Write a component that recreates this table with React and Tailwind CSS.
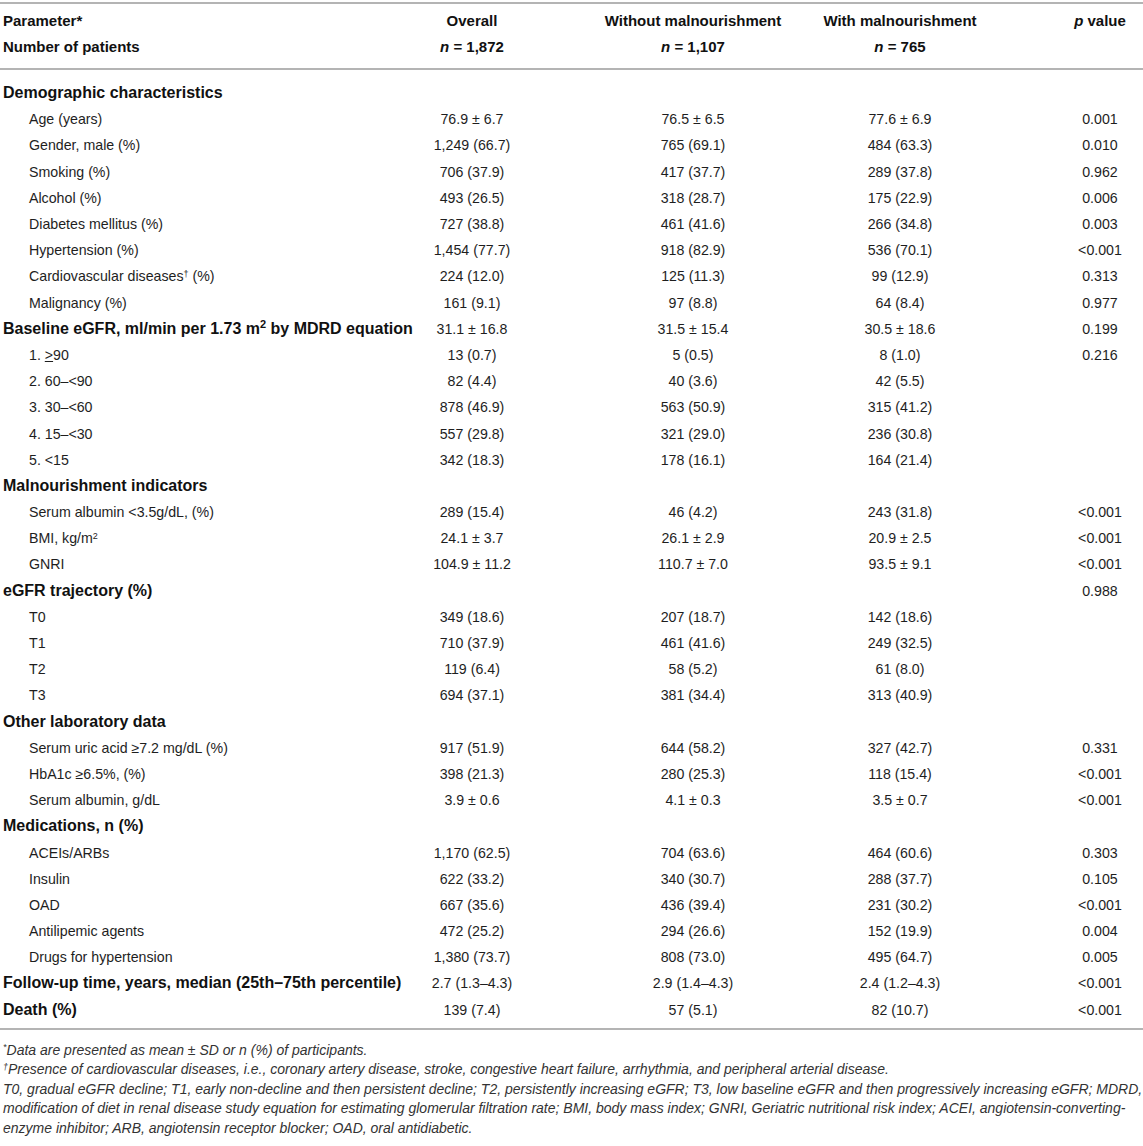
const sections = [
  { title: 'Demographic characteristics' },
  { label: 'Age (years)', v: ['76.9 ± 6.7', '76.5 ± 6.5', '77.6 ± 6.9', '0.001'] },
  { label: 'Gender, male (%)', v: ['1,249 (66.7)', '765 (69.1)', '484 (63.3)', '0.010'] },
  { label: 'Smoking (%)', v: ['706 (37.9)', '417 (37.7)', '289 (37.8)', '0.962'] },
  { label: 'Alcohol (%)', v: ['493 (26.5)', '318 (28.7)', '175 (22.9)', '0.006'] },
  { label: 'Diabetes mellitus (%)', v: ['727 (38.8)', '461 (41.6)', '266 (34.8)', '0.003'] },
  { label: 'Hypertension (%)', v: ['1,454 (77.7)', '918 (82.9)', '536 (70.1)', '<0.001'] },
  {
    label: (
      <>
        Cardiovascular diseases<sup className="text-[9px]">†</sup> (%)
      </>
    ),
    v: ['224 (12.0)', '125 (11.3)', '99 (12.9)', '0.313'],
  },
  { label: 'Malignancy (%)', v: ['161 (9.1)', '97 (8.8)', '64 (8.4)', '0.977'] },
  {
    title: (
      <>
        Baseline eGFR, ml/min per 1.73 m<sup className="text-[11px]">2</sup> by MDRD equation
      </>
    ),
    v: ['31.1 ± 16.8', '31.5 ± 15.4', '30.5 ± 18.6', '0.199'],
  },
  {
    label: (
      <>
        1. <span className="underline">&gt;</span>90
      </>
    ),
    v: ['13 (0.7)', '5 (0.5)', '8 (1.0)', '0.216'],
  },
  { label: '2. 60–<90', v: ['82 (4.4)', '40 (3.6)', '42 (5.5)', ''] },
  { label: '3. 30–<60', v: ['878 (46.9)', '563 (50.9)', '315 (41.2)', ''] },
  { label: '4. 15–<30', v: ['557 (29.8)', '321 (29.0)', '236 (30.8)', ''] },
  { label: '5. <15', v: ['342 (18.3)', '178 (16.1)', '164 (21.4)', ''] },
  { title: 'Malnourishment indicators' },
  { label: 'Serum albumin <3.5g/dL, (%)', v: ['289 (15.4)', '46 (4.2)', '243 (31.8)', '<0.001'] },
  {
    label: (
      <>
        BMI, kg/m<sup className="text-[9px]">2</sup>
      </>
    ),
    v: ['24.1 ± 3.7', '26.1 ± 2.9', '20.9 ± 2.5', '<0.001'],
  },
  { label: 'GNRI', v: ['104.9 ± 11.2', '110.7 ± 7.0', '93.5 ± 9.1', '<0.001'] },
  { title: 'eGFR trajectory (%)', v: ['', '', '', '0.988'] },
  { label: 'T0', v: ['349 (18.6)', '207 (18.7)', '142 (18.6)', ''] },
  { label: 'T1', v: ['710 (37.9)', '461 (41.6)', '249 (32.5)', ''] },
  { label: 'T2', v: ['119 (6.4)', '58 (5.2)', '61 (8.0)', ''] },
  { label: 'T3', v: ['694 (37.1)', '381 (34.4)', '313 (40.9)', ''] },
  { title: 'Other laboratory data' },
  { label: 'Serum uric acid ≥7.2 mg/dL (%)', v: ['917 (51.9)', '644 (58.2)', '327 (42.7)', '0.331'] },
  { label: 'HbA1c ≥6.5%, (%)', v: ['398 (21.3)', '280 (25.3)', '118 (15.4)', '<0.001'] },
  { label: 'Serum albumin, g/dL', v: ['3.9 ± 0.6', '4.1 ± 0.3', '3.5 ± 0.7', '<0.001'] },
  { title: 'Medications, n (%)' },
  { label: 'ACEIs/ARBs', v: ['1,170 (62.5)', '704 (63.6)', '464 (60.6)', '0.303'] },
  { label: 'Insulin', v: ['622 (33.2)', '340 (30.7)', '288 (37.7)', '0.105'] },
  { label: 'OAD', v: ['667 (35.6)', '436 (39.4)', '231 (30.2)', '<0.001'] },
  { label: 'Antilipemic agents', v: ['472 (25.2)', '294 (26.6)', '152 (19.9)', '0.004'] },
  { label: 'Drugs for hypertension', v: ['1,380 (73.7)', '808 (73.0)', '495 (64.7)', '0.005'] },
  {
    title: 'Follow-up time, years, median (25th–75th percentile)',
    v: ['2.7 (1.3–4.3)', '2.9 (1.4–4.3)', '2.4 (1.2–4.3)', '<0.001'],
  },
  { title: 'Death (%)', v: ['139 (7.4)', '57 (5.1)', '82 (10.7)', '<0.001'] },
];

const Row = ({ row }) => {
  const isTitle = row.title !== undefined;
  const values = row.v || ['', '', '', ''];
  return (
    <tr className="h-[26.2px]">
      <td
        className={`whitespace-nowrap ${
          isTitle ? 'pl-[3px] text-[16px] font-bold text-[#111]' : 'pl-[29px]'
        }`}
      >
        {isTitle ? row.title : row.label}
      </td>
      {values.slice(0, 3).map((val, i) => (
        <td key={i} className="text-center whitespace-nowrap">
          {val}
        </td>
      ))}
      <td className="pl-[61px] text-center whitespace-nowrap">{values[3]}</td>
    </tr>
  );
};

export default function App() {
  return (
    <div className="w-[1143px] bg-white pt-[2px] text-[14.2px] leading-[26px] text-[#1e1e1e] font-['Liberation_Sans','Helvetica',Arial,sans-serif]">
      <table className="w-full table-fixed border-collapse">
        <colgroup>
          <col className="w-[362px]" />
          <col className="w-[220px]" />
          <col className="w-[222px]" />
          <col className="w-[192px]" />
          <col />
        </colgroup>
        <thead className="font-bold text-[15px] text-[#111]">
          <tr className="h-[31px] border-t-2 border-[#b4b4b4] align-bottom">
            <td className="pl-[3px]">Parameter*</td>
            <td className="text-center">Overall</td>
            <td className="text-center whitespace-nowrap">Without malnourishment</td>
            <td className="text-center whitespace-nowrap">With malnourishment</td>
            <td className="pl-[61px] text-center whitespace-nowrap">
              <span className="italic">p</span> value
            </td>
          </tr>
          <tr className="h-[35px] border-b-2 border-[#b4b4b4] align-top">
            <td className="pl-[3px]">Number of patients</td>
            <td className="text-center">
              <span className="italic">n</span> = 1,872
            </td>
            <td className="text-center">
              <span className="italic">n</span> = 1,107
            </td>
            <td className="text-center">
              <span className="italic">n</span> = 765
            </td>
            <td />
          </tr>
        </thead>
        <tbody>
          <tr className="h-[11px]">
            <td colSpan={5} />
          </tr>
          {sections.map((row, i) => (
            <Row key={i} row={row} />
          ))}
          <tr className="h-[6px] border-b-2 border-[#b4b4b4]">
            <td colSpan={5} />
          </tr>
        </tbody>
      </table>
      <div className="pt-[11px] pl-[3px] text-[14px] leading-[19.5px] italic text-[#333]">
        <p>
          <sup className="text-[9px]">*</sup>Data are presented as mean ± SD or n (%) of participants.
        </p>
        <p>
          <sup className="text-[9px]">†</sup>Presence of cardiovascular diseases, i.e., coronary artery disease, stroke,
          congestive heart failure, arrhythmia, and peripheral arterial disease.
        </p>
        <p className="whitespace-nowrap">
          T0, gradual eGFR decline; T1, early non-decline and then persistent decline; T2, persistently increasing
          eGFR; T3, low baseline eGFR and then progressively increasing eGFR; MDRD,
          <br />
          modification of diet in renal disease study equation for estimating glomerular filtration rate; BMI, body
          mass index; GNRI, Geriatric nutritional risk index; ACEI, angiotensin-converting-
          <br />
          enzyme inhibitor; ARB, angiotensin receptor blocker; OAD, oral antidiabetic.
        </p>
      </div>
    </div>
  );
}
